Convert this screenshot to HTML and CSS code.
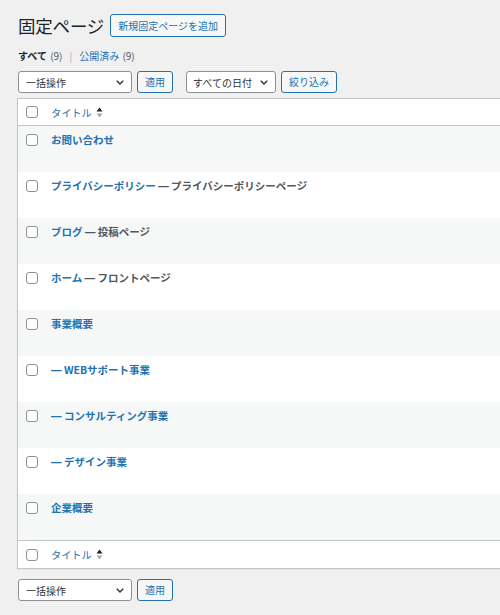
FILE: index.html
```html
<!DOCTYPE html>
<html lang="ja">
<head>
<meta charset="utf-8">
<title>固定ページ</title>
<link rel="stylesheet" href="styles.css">
</head>
<body>
<div class="wrap">
  <div class="heading">
    <h1 class="title">固定ページ</h1>
    <a class="btn">新規固定ページを追加</a>
  </div>

  <ul class="subsub">
    <li class="current">すべて <span class="count">(9)</span></li>
    <li class="sep">|</li>
    <li><a class="link">公開済み <span class="count">(9)</span></a></li>
  </ul>

  <div class="tablenav">
    <div class="select bulk"><span>一括操作</span><svg class="chev" width="8" height="5" viewBox="0 0 8 5"><path d="M0.8 0.8 L4 4 L7.2 0.8" fill="none" stroke="#2c3338" stroke-width="1.4"/></svg></div>
    <a class="btn">適用</a>
    <div class="select date"><span>すべての日付</span><svg class="chev" width="8" height="5" viewBox="0 0 8 5"><path d="M0.8 0.8 L4 4 L7.2 0.8" fill="none" stroke="#2c3338" stroke-width="1.4"/></svg></div>
    <a class="btn">絞り込み</a>
  </div>

  <div class="list">
    <div class="row head">
      <span class="cb"></span>
      <span class="col-title"><a class="sort">タイトル</a><svg class="sorticon" width="7" height="11" viewBox="0 0 7 11"><path d="M0.5 4.5 L3.5 0.5 L6.5 4.5 Z" fill="#1d2327"/><path d="M0.5 6.5 L6.5 6.5 L3.5 10.5 Z" fill="#a7aaad"/></svg></span>
    </div>
    <div class="row item odd"><span class="cb"></span><span class="name"><a class="plink">お問い合わせ</a></span></div>
    <div class="row item"><span class="cb"></span><span class="name"><a class="plink">プライバシーポリシー</a><span class="state"> <span class="dash">—</span> プライバシーポリシーページ</span></span></div>
    <div class="row item odd"><span class="cb"></span><span class="name"><a class="plink">ブログ</a><span class="state"> <span class="dash">—</span> 投稿ページ</span></span></div>
    <div class="row item"><span class="cb"></span><span class="name"><a class="plink">ホーム</a><span class="state"> <span class="dash">—</span> フロントページ</span></span></div>
    <div class="row item odd"><span class="cb"></span><span class="name"><a class="plink">事業概要</a></span></div>
    <div class="row item"><span class="cb"></span><span class="name"><a class="plink"><span class="dash">—</span> WEBサポート事業</a></span></div>
    <div class="row item odd"><span class="cb"></span><span class="name"><a class="plink"><span class="dash">—</span> コンサルティング事業</a></span></div>
    <div class="row item"><span class="cb"></span><span class="name"><a class="plink"><span class="dash">—</span> デザイン事業</a></span></div>
    <div class="row item odd"><span class="cb"></span><span class="name"><a class="plink">企業概要</a></span></div>
    <div class="row foot">
      <span class="cb"></span>
      <span class="col-title"><a class="sort">タイトル</a><svg class="sorticon" width="7" height="11" viewBox="0 0 7 11"><path d="M0.5 4.5 L3.5 0.5 L6.5 4.5 Z" fill="#1d2327"/><path d="M0.5 6.5 L6.5 6.5 L3.5 10.5 Z" fill="#a7aaad"/></svg></span>
    </div>
  </div>

  <div class="tablenav bottom">
    <div class="select bulk"><span>一括操作</span><svg class="chev" width="8" height="5" viewBox="0 0 8 5"><path d="M0.8 0.8 L4 4 L7.2 0.8" fill="none" stroke="#2c3338" stroke-width="1.4"/></svg></div>
    <a class="btn">適用</a>
  </div>
</div>
</body>
</html>
```

FILE: styles.css
```css
* { box-sizing: border-box; }
html, body {
  margin: 0;
  padding: 0;
  background: #f0f0f1;
  overflow: hidden;
}
body {
  font-family: "Noto Sans CJK JP", "Noto Sans", sans-serif;
  color: #1d2327;
  font-size: 10px;
}
.wrap {
  padding: 14px 0 0 17px;
}
.heading {
  display: flex;
  align-items: center;
  gap: 6px;
  height: 23px;
}
.title {
  margin: 0;
  font-size: 17.5px;
  font-weight: 400;
  line-height: 23px;
  color: #1d2327;
  letter-spacing: -0.2px;
  padding-left: 1px;
}
.btn {
  display: inline-flex;
  align-items: center;
  height: 23px;
  padding: 0 7px;
  border: 1px solid #2271b1;
  border-radius: 3px;
  background: #f6f7f7;
  color: #2271b1;
  font-size: 10px;
  line-height: 1;
}
.subsub {
  list-style: none;
  margin: 11px 0 0 0;
  padding: 0 0 0 1px;
  display: flex;
  gap: 7px;
  font-size: 10px;
  line-height: 16px;
}
.subsub .current { font-weight: 700; color: #1d2327; }
.subsub .count { font-weight: 400; color: #50575e; margin-left: 1px; }
.subsub .sep { color: #a7aaad; }
.subsub .link { color: #2271b1; }
.tablenav {
  display: flex;
  align-items: center;
  margin-top: 7px;
  height: 22px;
}
.tablenav .btn { height: 22px; margin-left: 5px; }
.select {
  display: flex;
  align-items: center;
  justify-content: space-between;
  height: 22px;
  border: 1px solid #8c8f94;
  border-radius: 3px;
  background: #fff;
  color: #2c3338;
  font-size: 10px;
  padding: 0 7px 0 7px;
}
.select.bulk { width: 114px; margin-left: 1px; }
.select.date { width: 90px; margin-left: 13px; padding-left: 6px; }
.chev { flex: none; }
.list {
  margin-top: 5px;
  background: #fff;
  border: 1px solid #c3c4c7;
  border-right: none;
  box-shadow: 0 1px 1px rgba(0,0,0,0.04);
}
.row {
  display: flex;
}
.row.head {
  height: 27px;
  align-items: center;
  border-bottom: 1px solid #c3c4c7;
}
.row.foot {
  height: 28px;
  align-items: center;
  border-top: 1px solid #c3c4c7;
}
.row.item {
  height: 46px;
  align-items: flex-start;
  padding-top: 6px;
}
.row.odd { background: #f6f7f7; }
.cb {
  flex: none;
  width: 12px;
  height: 12px;
  margin-left: 8px;
  border: 1px solid #8c8f94;
  border-radius: 3px;
  background: #fff;
}
.row.item .cb { margin-top: 2px; }
.col-title {
  display: flex;
  align-items: center;
  gap: 4px;
  margin-left: 13px;
}
.sort {
  color: #2271b1;
  font-size: 10.2px;
  line-height: 15px;
}
.name {
  margin-left: 13px;
  font-size: 10.5px;
  line-height: 15px;
  font-weight: 700;
}
.plink { color: #2271b1; }
.state { color: #50575e; }
.dash {
  font-family: "Liberation Sans", sans-serif;
  font-weight: 700;
}
.tablenav.bottom { margin-top: 10px; }
```
